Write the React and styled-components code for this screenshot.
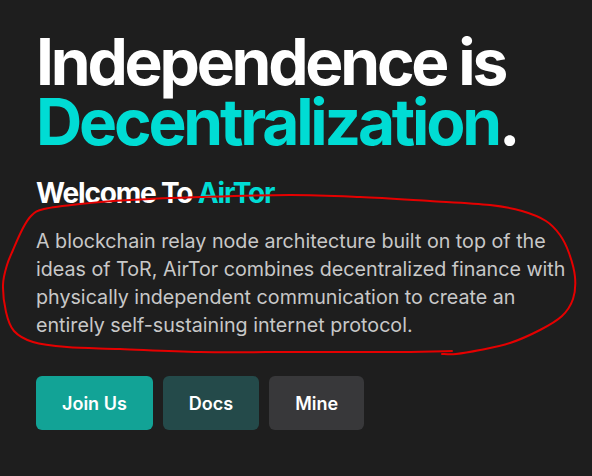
import React from "react";
import styled, { createGlobalStyle } from "styled-components";

const GlobalStyle = createGlobalStyle`
  html, body { margin: 0; padding: 0; background: #1e1e1e; }
  body { font-family: Inter, "Noto Sans", sans-serif; -webkit-font-smoothing: antialiased; }
`;

const Page = styled.main`
  position: relative;
  width: 592px;
  height: 476px;
  box-sizing: border-box;
  padding: 32px 16px 0 36px;
  background: #1e1e1e;
  overflow: hidden;
`;

const Title = styled.h1`
  margin: 0;
  font-family: Inter, sans-serif;
  font-weight: 700;
  font-size: 64px;
  line-height: 60px;
  letter-spacing: -0.05em;
  color: #ffffff;
`;

const Accent = styled.span`
  color: #00dcd4;
`;

const Subtitle = styled.h2`
  margin: 24px 0 0;
  font-family: Inter, sans-serif;
  font-weight: 700;
  font-size: 28px;
  line-height: 34px;
  letter-spacing: -0.042em;
  color: #ffffff;
`;

const Lead = styled.p`
  margin: 17px 0 0;
  max-width: 540px;
  font-family: Inter, sans-serif;
  font-weight: 400;
  font-size: 19.7px;
  line-height: 28px;
  color: #c8c8c8;
`;

const Actions = styled.div`
  display: flex;
  gap: 10px;
  margin-top: 37px;
`;

const tones = {
  primary: "#12a396",
  secondary: "#244a4a",
  neutral: "#38383a",
};

const Button = styled.button`
  height: 54px;
  padding: 0 26px;
  border: none;
  border-radius: 6px;
  background: ${(p) => tones[p.$tone]};
  color: #ffffff;
  font-family: Inter, sans-serif;
  font-weight: 600;
  font-size: 18px;
  cursor: pointer;
`;

const Scribble = styled.svg`
  position: absolute;
  left: 0;
  top: 0;
  pointer-events: none;
`;

const pts = [
  [452, 351], [400, 352], [300, 352], [200, 352], [120, 349], [67, 347],
  [33, 342], [14, 331], [6, 312], [3, 285], [7, 265], [13, 250], [22, 230],
  [31, 216], [44, 209], [80, 204], [130, 200], [200, 197], [290, 195],
  [360, 197], [430, 201], [490, 205], [522, 211], [546, 221], [560, 235],
  [569, 253], [575, 277], [573, 299], [562, 316], [540, 330], [510, 343],
  [480, 350], [456, 354], [442, 354],
];

function smoothPath(p) {
  let d = `M ${p[0][0]} ${p[0][1]}`;
  for (let i = 0; i < p.length - 1; i++) {
    const p0 = p[i - 1] || p[i];
    const p1 = p[i];
    const p2 = p[i + 1];
    const p3 = p[i + 2] || p2;
    const c1x = p1[0] + (p2[0] - p0[0]) / 6;
    const c1y = p1[1] + (p2[1] - p0[1]) / 6;
    const c2x = p2[0] - (p3[0] - p1[0]) / 6;
    const c2y = p2[1] - (p3[1] - p1[1]) / 6;
    d += ` C ${c1x.toFixed(1)} ${c1y.toFixed(1)} ${c2x.toFixed(1)} ${c2y.toFixed(1)} ${p2[0]} ${p2[1]}`;
  }
  return d;
}

export default function App() {
  return (
    <>
      <GlobalStyle />
      <Page>
        <Title>
          Independence is
          <br />
          <Accent>Decentralization</Accent>.
        </Title>
        <Subtitle>
          Welcome To <Accent>AirTor</Accent>
        </Subtitle>
        <Lead>
          A blockchain relay node architecture built on top of the ideas of ToR,
          AirTor combines decentralized finance with physically independent
          communication to create an entirely self-sustaining internet protocol.
        </Lead>
        <Actions>
          <Button $tone="primary">Join Us</Button>
          <Button $tone="secondary">Docs</Button>
          <Button $tone="neutral">Mine</Button>
        </Actions>
        <Scribble width="592" height="476" viewBox="0 0 592 476">
          <path
            d={smoothPath(pts)}
            fill="none"
            stroke="#e50000"
            strokeWidth="2"
            strokeLinecap="round"
            strokeLinejoin="round"
          />
        </Scribble>
      </Page>
    </>
  );
}
